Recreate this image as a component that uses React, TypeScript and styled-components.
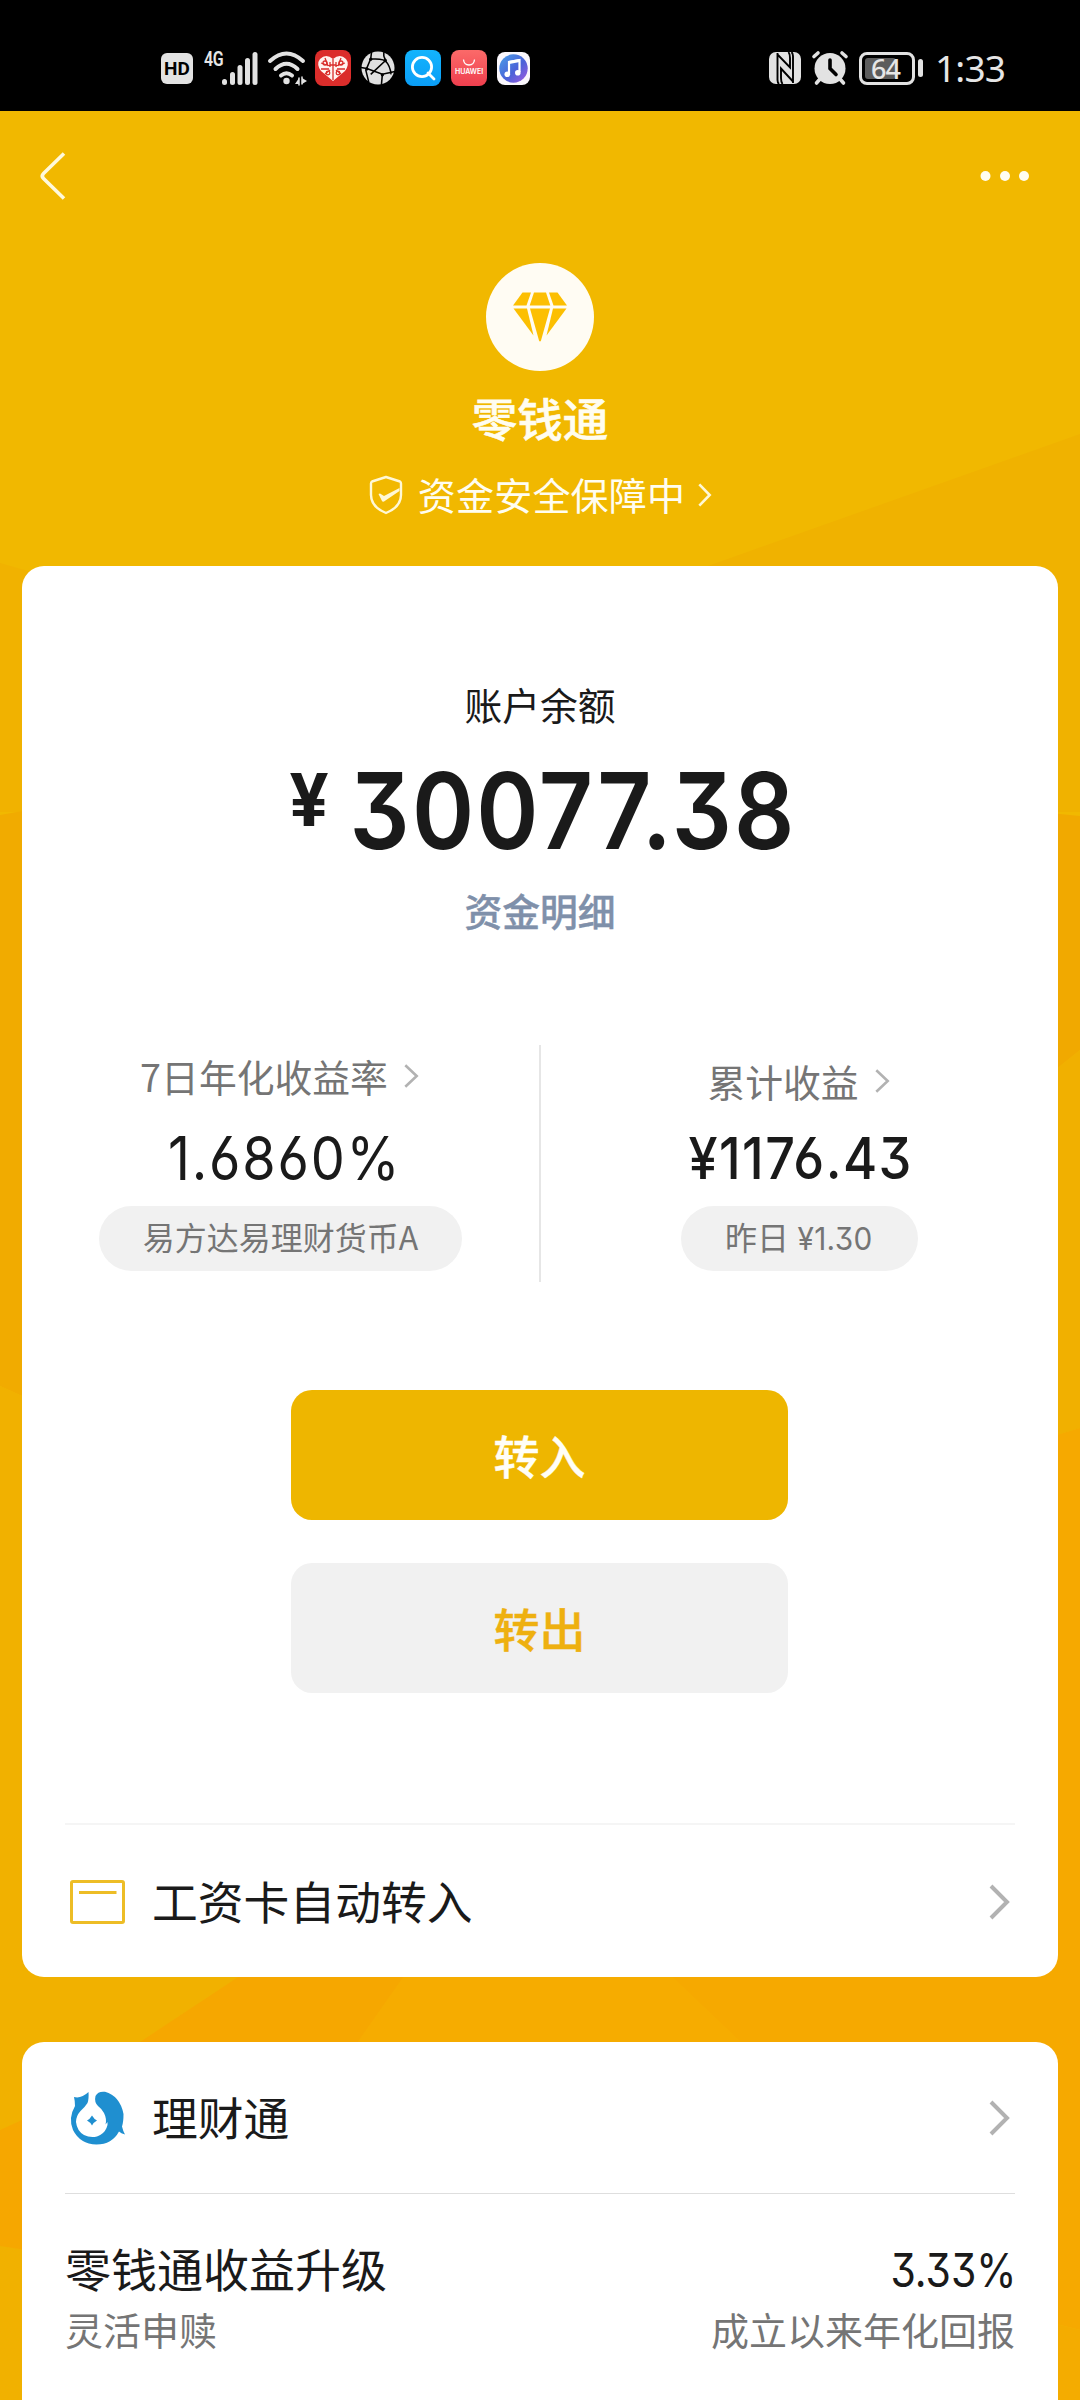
import React from "react";
import styled, { createGlobalStyle } from "styled-components";

const GlobalStyle = createGlobalStyle`
  *, *::before, *::after { box-sizing: border-box; }
  body {
    margin: 0;
    background: #f1b800;
    font-family: "Noto Sans CJK SC", "Noto Sans", sans-serif;
    color: #1a1a1a;
  }
  svg { display: block; flex: none; overflow: visible; }
`;

const Screen = styled.div`
  position: relative;
  width: 1080px;
  height: 2400px;
  overflow: hidden;
  display: flex;
  flex-direction: column;
`;

const Backdrop = styled.svg`
  position: absolute;
  inset: 0;
  z-index: -1;
`;

/* ---------- status bar ---------- */

const StatusBar = styled.header`
  height: 111px;
  flex: none;
  padding: 25px 77px 0 161px;
  background: #000;
  color: #e6e6e6;
  display: flex;
  justify-content: space-between;
  align-items: center;
`;

const StatusGroup = styled.div<{ $gap: number }>`
  display: flex;
  align-items: center;
  gap: ${(p) => p.$gap}px;
`;

const HdBadge = styled.span`
  width: 32px;
  height: 31px;
  border-radius: 6px;
  background: #e2e2e2;
  color: #000;
  font: 700 19px/32px Roboto, sans-serif;
  text-align: center;
`;

const Network = styled.div`
  display: flex;
  align-items: flex-start;
  margin-left: 1px;
`;

const NetworkLabel = styled.span`
  width: 18px;
  font: 600 21px/17px Roboto, sans-serif;
  letter-spacing: -0.5px;
  transform: scaleX(0.76);
  transform-origin: left;
`;

const AppTile = styled.span<{ $bg: string }>`
  width: 36px;
  height: 36px;
  border-radius: 8px;
  background: ${(p) => p.$bg};
  color: #fff;
  display: flex;
  flex-direction: column;
  align-items: center;
  justify-content: center;
`;

const StoreName = styled.span`
  font: 600 7px/10px Inter, sans-serif;
`;

const Battery = styled.div`
  display: flex;
  align-items: center;
  gap: 3px;
`;

const BatteryBody = styled.span`
  width: 56px;
  height: 33px;
  border: 3px solid #e2e2e2;
  border-radius: 8px;
  padding: 3px;
  display: flex;
`;

const BatteryLevel = styled.span`
  width: 31px;
  height: 21px;
  border-radius: 3px;
  background: #5c5c5c;
  padding-left: 6px;
  font: 500 27px/22px "Noto Sans", sans-serif;
  letter-spacing: -0.9px;
  white-space: nowrap;
`;

const BatteryTip = styled.span`
  width: 5px;
  height: 18px;
  border-radius: 3px;
  background: #e2e2e2;
`;

const Clock = styled.span`
  width: 68px;
  font: 400 37px/44px "Noto Sans", sans-serif;
  letter-spacing: -0.8px;
  margin-left: 1px;
  white-space: nowrap;
`;

/* ---------- page head ---------- */

const NavBar = styled.nav`
  height: 130px;
  flex: none;
  padding: 0 50px 0 37px;
  display: flex;
  align-items: center;
  justify-content: space-between;
`;

const Hero = styled.section`
  height: 325px;
  flex: none;
  padding-top: 22px;
  display: flex;
  flex-direction: column;
  align-items: center;
  color: #fffdf0;
`;

const GemDisc = styled.div`
  width: 108px;
  height: 108px;
  border-radius: 50%;
  background: #fffcf3;
  display: flex;
  align-items: center;
  justify-content: center;
`;

const Title = styled.h1`
  margin: 16px 0 0;
  font-size: 45.5px;
  line-height: 60px;
  font-weight: 500;
  -webkit-text-stroke: 0.6px currentColor;
`;

const Guarantee = styled.div`
  margin-top: 23px;
  height: 50px;
  display: flex;
  align-items: center;
  font-size: 38px;
  letter-spacing: 0.2px;
`;

const GuaranteeText = styled.span`
  margin: -3px 13px 0 15px;
  line-height: 46px;
`;

/* ---------- cards ---------- */

const Card = styled.section<{ $height: number }>`
  height: ${(p) => p.$height}px;
  flex: none;
  margin: 0 22px 65px;
  border-radius: 22px;
  background: #fff;
`;

const Balance = styled.div`
  height: 479px;
  padding-top: 112px;
  display: flex;
  flex-direction: column;
  align-items: center;
`;

const BalanceLabel = styled.div`
  font-size: 37.8px;
  line-height: 52px;
`;

const Figure = styled.span<{ $size: number; $weight?: number; $squeeze?: number; $track?: number }>`
  display: inline-block;
  font-family: Inter, Roboto, sans-serif;
  font-feature-settings: "cv09", "cv03";
  font-size: ${(p) => p.$size}px;
  font-weight: ${(p) => p.$weight ?? 400};
  letter-spacing: ${(p) => p.$track ?? 0}px;
  transform: scaleX(${(p) => p.$squeeze ?? 1});
  white-space: nowrap;
`;

const Amount = styled.div`
  height: 120px;
  margin-top: 21px;
  padding-left: 19px;
  display: flex;
  justify-content: center;
  align-items: flex-start;
  line-height: 120px;
`;

const Currency = styled.span`
  font: 700 75px/100px Roboto, sans-serif;
  margin: -1px -7px 0 14px;
  transform: scaleX(0.96);
`;

const DetailLink = styled.a`
  margin-top: 13px;
  font-size: 37.8px;
  line-height: 52px;
  font-weight: 500;
  -webkit-text-stroke: 0.4px currentColor;
  color: #7f90aa;
`;

const Stats = styled.div`
  display: flex;
  height: 237px;
`;

const StatDivider = styled.div`
  width: 2px;
  background: #e6e6e6;
`;

const Stat = styled.div<{ $drop: number }>`
  flex: 1;
  display: flex;
  flex-direction: column;
  align-items: center;
  padding-top: ${(p) => 5 + p.$drop}px;
`;

const StatLabel = styled.div`
  display: flex;
  align-items: center;
  gap: 16px;
  padding-right: 3px;
  font-size: 37.8px;
  line-height: 52px;
  color: #757575;
`;

const StatValue = styled.div<{ $top: number; $indent?: number }>`
  margin-top: ${(p) => p.$top}px;
  padding-left: ${(p) => p.$indent ?? 0}px;
  height: 64px;
  line-height: 64px;
`;

const Pill = styled.div`
  margin-top: 16px;
  height: 65px;
  padding: 0 44px;
  border-radius: 33px;
  background: #f1f1f1;
  color: #757575;
  font-size: 32px;
  line-height: 61px;
  white-space: nowrap;
`;

const Actions = styled.div`
  margin: 108px 1px 0 0;
  display: flex;
  flex-direction: column;
  align-items: center;
  gap: 43px;
`;

const ActionButton = styled.button<{ $primary?: boolean }>`
  width: 497px;
  height: 130px;
  border: 0;
  border-radius: 21px;
  padding: 0;
  font: 500 46px/128px "Noto Sans CJK SC", sans-serif;
  -webkit-text-stroke: 0.4px currentColor;
  display: flex;
  justify-content: center;
  background: ${(p) => (p.$primary ? "#eeb600" : "#f1f1f1")};
  color: ${(p) => (p.$primary ? "#fffef6" : "#eeb010")};
`;

const Rule = styled.div<{ $top?: number; $height: number; $color: string }>`
  height: ${(p) => p.$height}px;
  margin: ${(p) => p.$top ?? 0}px 43px 0;
  background: ${(p) => p.$color};
`;

const Row = styled.div<{ $height: number }>`
  height: ${(p) => p.$height}px;
  padding: 0 49px 0 48px;
  display: flex;
  align-items: center;
`;

const RowLabel = styled.span`
  flex: 1;
  margin: -3px 0 0 27px;
  font-size: 45.8px;
  line-height: 60px;
`;

const Product = styled.div`
  padding: 43px 43px 0;
  display: flex;
  justify-content: space-between;
`;

const ProductSide = styled.div<{ $end?: boolean }>`
  display: flex;
  flex-direction: column;
  align-items: ${(p) => (p.$end ? "flex-end" : "flex-start")};
`;

const ProductMain = styled.div`
  height: 62px;
  font-size: 46px;
  line-height: 60px;
`;

const ProductSub = styled.div`
  font-size: 38px;
  line-height: 60px;
  color: #757575;
`;

const RateBox = styled.span`
  display: block;
  margin-right: -11px;
`;

/* ---------- drawings ---------- */

function Chevron({ w, h, stroke, color }: { w: number; h: number; stroke: number; color: string }) {
  const p = stroke / 2;
  return (
    <svg width={w} height={h} viewBox={`0 0 ${w} ${h}`} fill="none" stroke={color} strokeWidth={stroke}>
      <path d={`M${p} ${p}L${w - p} ${h / 2}L${p} ${h - p}`} />
    </svg>
  );
}

function SignalBars() {
  return (
    <svg width="36" height="34" fill="#e2e2e2">
      <rect x="0" y="28" width="5" height="6" rx="2.5" />
      <rect x="8" y="21" width="5" height="13" rx="2.5" />
      <rect x="15.5" y="14" width="5" height="20" rx="2.5" />
      <rect x="23" y="7" width="5" height="27" rx="2.5" />
      <rect x="30.5" y="1" width="5" height="33" rx="2.5" />
    </svg>
  );
}

function Wifi() {
  return (
    <svg width="37" height="36" fill="none" stroke="#e2e2e2" strokeWidth="4" strokeLinecap="round">
      <path d="M2 11Q18.500 -4 35 11M7.500 19Q18.500 8.500 29.500 19M13 25.500Q18.500 21 24 25.500" />
      <circle cx="18.500" cy="31" r="3.200" fill="#e2e2e2" stroke="none" />
      <path d="M31 28v6h-4zM34 34v-6l5 3z" fill="#e2e2e2" stroke="none" />
      <path d="M31 28v7M34 27v7" strokeWidth="1.500" />
    </svg>
  );
}

function FlowerHeart() {
  return (
    <svg width="32" height="28" viewBox="0 0 32 28">
      <path d="M16 27L4 17Q-1 10 3 5Q9-1 16 5Q23-1 29 5Q33 10 28 17Z" fill="#fff3ef" />
      <g stroke="#d92d2a" strokeWidth="1.300" fill="none">
        <path d="M16 5V26M4 9L13 12M8 4L11 12M4 15L12 15M8 20L13 16M28 9L19 12M24 4L21 12M28 15L20 15M24 20L19 16M13 8V13M19 8V13M13 11H19" />
        <circle cx="8" cy="9" r="2" />
        <circle cx="24" cy="9" r="2" />
        <circle cx="11" cy="19" r="1.800" />
        <circle cx="21" cy="19" r="1.800" />
      </g>
    </svg>
  );
}

function Globe() {
  return (
    <svg width="34" height="34" viewBox="0 0 35 35">
      <circle cx="17.500" cy="17.500" r="17" fill="#e0e0e0" />
      <path
        d="M11 0L10 8M0 17L6 18L22 24L35 21M10 8Q21 8 25 10Q30 15 31 24M10 8L5 20L8 32M25 10L10 24M24 0Q22 5 26 10M22 24L21 35"
        fill="none"
        stroke="#000"
        strokeWidth="1.600"
      />
      <circle cx="10" cy="8.500" r="1.700" />
      <circle cx="25" cy="10" r="1.700" />
      <circle cx="6" cy="18.500" r="1.700" />
      <circle cx="22" cy="24.500" r="1.700" />
    </svg>
  );
}

function Magnifier() {
  return (
    <svg width="26" height="26" fill="none" stroke="#fff" strokeWidth="2.800" strokeLinecap="round">
      <circle cx="12" cy="12" r="9.600" />
      <path d="M18 18L24 24" />
    </svg>
  );
}

function Music() {
  return (
    <svg width="33" height="33" viewBox="0 0 33 33">
      <defs>
        <linearGradient id="disc" x1="0" y1="0" x2="1" y2="1">
          <stop offset="0" stopColor="#4aa0e8" />
          <stop offset="0.550" stopColor="#4b62d8" />
          <stop offset="1" stopColor="#a45be0" />
        </linearGradient>
      </defs>
      <rect width="33" height="33" rx="8" fill="#fbf8fd" />
      <circle cx="16.500" cy="16.500" r="14.200" fill="url(#disc)" />
      <path d="M12 22V10L22.500 8V20" fill="none" stroke="#fff" strokeWidth="2.200" />
      <path d="M12 10.500L22.500 8.500" stroke="#fff" strokeWidth="3.200" />
      <circle cx="10.300" cy="22.300" r="2.800" fill="#fff" />
      <circle cx="20.800" cy="20.800" r="2.800" fill="#fff" />
    </svg>
  );
}

function Nfc() {
  return (
    <svg width="32" height="32" viewBox="0 0 32 32">
      <rect width="32" height="32" rx="7" fill="#e2e2e2" />
      <path
        d="M8.500 1V28Q8.500 30.500 10 32M24 31V4Q24 1.500 22.500 0M8.500 2.500L21 15.500V6Q21 2 19.500 0M24 29.500L12 16.500V26Q12 30 13.500 32"
        fill="none"
        stroke="#000"
        strokeWidth="1.900"
      />
    </svg>
  );
}

function Alarm() {
  return (
    <svg width="36" height="34" viewBox="0 0 36 34" fill="none" stroke="#e2e2e2" strokeLinecap="round">
      <circle cx="18" cy="17.500" r="15.500" fill="#e2e2e2" stroke="none" />
      <path d="M5 2.500L1.500 6M31 2.500L34.500 6" stroke="#000" strokeWidth="7" />
      <path d="M2 5.500L6 2M34 5.500L30 2M4.500 32L8 28M31.500 32L28 28" strokeWidth="3.600" />
      <path d="M18 9V17.500L24 23.500" stroke="#000" strokeWidth="3.600" />
    </svg>
  );
}

function BackArrow() {
  return (
    <svg width="30" height="48" fill="none" stroke="#fff9dc" strokeWidth="3.600">
      <path d="M27 1.500L6.500 21.500Q4 24 6.500 26.500L27 46.500" />
    </svg>
  );
}

function MoreDots() {
  return (
    <svg width="50" height="12" fill="#fffdf2">
      <circle cx="5.500" cy="6" r="5" />
      <circle cx="25" cy="6" r="5" />
      <circle cx="44" cy="6" r="5" />
    </svg>
  );
}

function Gem() {
  return (
    <svg width="56" height="50" viewBox="0 0 56 50" fill="#fcbf02">
      <path d="M10.500 0.500H19L14.500 13.500H1Z" />
      <path d="M22 0.500H34L38.300 13.500H17.700Z" />
      <path d="M37 0.500H45.500L55 13.500H41.500Z" />
      <path d="M1.500 16.500H15L21.500 43.500Z" />
      <path d="M18 16.500H38L29 48.500Q28 50.500 27 48.500Z" />
      <path d="M41 16.500H54.500L34.500 43.500Z" />
    </svg>
  );
}

function Shield() {
  return (
    <svg width="34" height="40" viewBox="0 0 34 40">
      <path
        d="M17 2L31 6.500Q32 7 32 8.500V20Q32 32 17 38Q2 32 2 20V8.500Q2 7 3 6.500Z"
        fill="none"
        stroke="#fff8d6"
        strokeWidth="2.400"
        strokeLinejoin="round"
      />
      <path d="M9.500 19L11 18.500L15 21L30.500 13V16L15 26.500Q13.500 27 13 26Z" fill="#fff8d6" />
    </svg>
  );
}

function SalaryCard() {
  return (
    <svg width="55" height="44" fill="none" stroke="#edbd26" strokeWidth="3">
      <rect x="1.500" y="1.500" width="52" height="41" rx="1.500" />
      <path d="M9 12.500H46.500" />
    </svg>
  );
}

function WealthLogo() {
  return (
    <svg width="55" height="54" viewBox="0 0 55 54" fill="#1f8fd0">
      <path d="M4 6Q11 8 18.500 1Q19 8 17.500 12Q15 16 10.500 20Q6 25 6 31Q7 40 14 44Q20 47 27 45.500Q34 43 36.500 37Q38 34 37.500 31L35.500 33.500Q37 28 34 22Q32 18 28 15Q24 11 25.500 5Q28 0 35 0.800Q50 5 53.500 23Q53.500 31 52 35.500Q53 40 55 43.500Q51 42.500 49 40.500Q42 53.500 26.500 53.500Q10 53 3 39Q-2 27 5 15Q5 10 4 6Z" />
      <path d="M22 24.500Q24 28 27 29.500Q24 31 22 34.500Q20 31 17 29.500Q20 28 22 24.500Z" />
    </svg>
  );
}

function Facets() {
  return (
    <Backdrop width="1080" height="2400" viewBox="0 0 1080 2400">
      <rect width="1080" height="2400" fill="#f1b800" />
      <path d="M1080 434L705 567V812L1080 812Z" fill="#f0b200" />
      <path d="M0 563L60 580V812H0Z" fill="#f1b200" />
      <path d="M0 815L40 808V1404L0 1386Z" fill="#f1ab00" />
      <path d="M0 1386L40 1404V1800H300V2400H0Z" fill="#f1b100" />
      <path d="M1040 812L1080 816V1050L1040 1082Z" fill="#f1a900" />
      <path d="M1080 1050L1040 1082V1440L1080 1428Z" fill="#f1b000" />
      <path d="M1040 1440L1080 1428V2330L1040 2320L260 2060V1960H1040Z" fill="#f6a900" />
      <path d="M1040 2320L1080 2330V2400H1040Z" fill="#f4ac00" />
      <path d="M264 1960L22 2120L0 2130V2246L40 2252L420 2060V1960Z" fill="#f6a700" />
      <path d="M415 1960L345 2060H760L655 1960Z" fill="#f6ac00" />
    </Backdrop>
  );
}

export default function App() {
  return (
    <Screen>
      <GlobalStyle />
      <Facets />

      <StatusBar>
        <StatusGroup $gap={10}>
          <HdBadge>HD</HdBadge>
          <Network>
            <NetworkLabel>4G</NetworkLabel>
            <SignalBars />
          </Network>
          <Wifi />
          <AppTile $bg="#db2d2b">
            <FlowerHeart />
          </AppTile>
          <Globe />
          <AppTile $bg="linear-gradient(#13b4fd, #0a9df6)">
            <Magnifier />
          </AppTile>
          <AppTile $bg="linear-gradient(#fb6a69, #ef3f4e)">
            <svg width="14" height="8" fill="none" stroke="#fff" strokeWidth="1.300">
              <path d="M1.500 0.500Q2 6 7 6Q12 6 12.500 0.500" />
            </svg>
            <StoreName>HUAWEI</StoreName>
          </AppTile>
          <Music />
        </StatusGroup>
        <StatusGroup $gap={11}>
          <Nfc />
          <Alarm />
          <Battery>
            <BatteryBody>
              <BatteryLevel>64</BatteryLevel>
            </BatteryBody>
            <BatteryTip />
          </Battery>
          <Clock>1:33</Clock>
        </StatusGroup>
      </StatusBar>

      <NavBar>
        <BackArrow />
        <MoreDots />
      </NavBar>

      <Hero>
        <GemDisc>
          <Gem />
        </GemDisc>
        <Title>零钱通</Title>
        <Guarantee>
          <Shield />
          <GuaranteeText>资金安全保障中</GuaranteeText>
          <Chevron w={13} h={24} stroke={2.6} color="#fff8d6" />
        </Guarantee>
      </Hero>

      <Card $height={1411}>
        <Balance>
          <BalanceLabel>账户余额</BalanceLabel>
          <Amount>
            <Currency>¥</Currency>
            <Figure $size={106} $weight={600} $squeeze={0.89} $track={2.4}>
              30077.38
            </Figure>
          </Amount>
          <DetailLink>资金明细</DetailLink>
        </Balance>

        <Stats>
          <Stat $drop={0}>
            <StatLabel>
              7日年化收益率
              <Chevron w={14} h={24} stroke={2.6} color="#b2b2b2" />
            </StatLabel>
            <StatValue $top={24} $indent={9}>
              <Figure $size={60} $squeeze={0.9} $track={2}>
                1.6860%
              </Figure>
            </StatValue>
            <Pill>易方达易理财货币A</Pill>
          </Stat>
          <StatDivider />
          <Stat $drop={5}>
            <StatLabel>
              累计收益
              <Chevron w={14} h={24} stroke={2.6} color="#b2b2b2" />
            </StatLabel>
            <StatValue $top={19} $indent={2}>
              <Figure $size={58} $weight={500} $squeeze={0.9} $track={1.6}>
                ¥1176.43
              </Figure>
            </StatValue>
            <Pill>
              昨日{" "}
              <Figure $size={31} $squeeze={0.96} $track={0.3}>
                ¥1.30
              </Figure>
            </Pill>
          </Stat>
        </Stats>

        <Actions>
          <ActionButton $primary>转入</ActionButton>
          <ActionButton>转出</ActionButton>
        </Actions>

        <Rule $top={130} $height={2} $color="#f5f5f5" />
        <Row $height={153}>
          <SalaryCard />
          <RowLabel>工资卡自动转入</RowLabel>
          <Chevron w={20} h={36} stroke={4} color="#b2b2b2" />
        </Row>
      </Card>

      <Card $height={420}>
        <Row $height={151}>
          <WealthLogo />
          <RowLabel>理财通</RowLabel>
          <Chevron w={20} h={36} stroke={4} color="#b2b2b2" />
        </Row>
        <Rule $height={1} $color="#dedede" />
        <Product>
          <ProductSide>
            <ProductMain>零钱通收益升级</ProductMain>
            <ProductSub>灵活申赎</ProductSub>
          </ProductSide>
          <ProductSide $end>
            <ProductMain>
              <RateBox>
                <Figure $size={47} $squeeze={0.87}>
                  3.33%
                </Figure>
              </RateBox>
            </ProductMain>
            <ProductSub>成立以来年化回报</ProductSub>
          </ProductSide>
        </Product>
      </Card>
    </Screen>
  );
}
